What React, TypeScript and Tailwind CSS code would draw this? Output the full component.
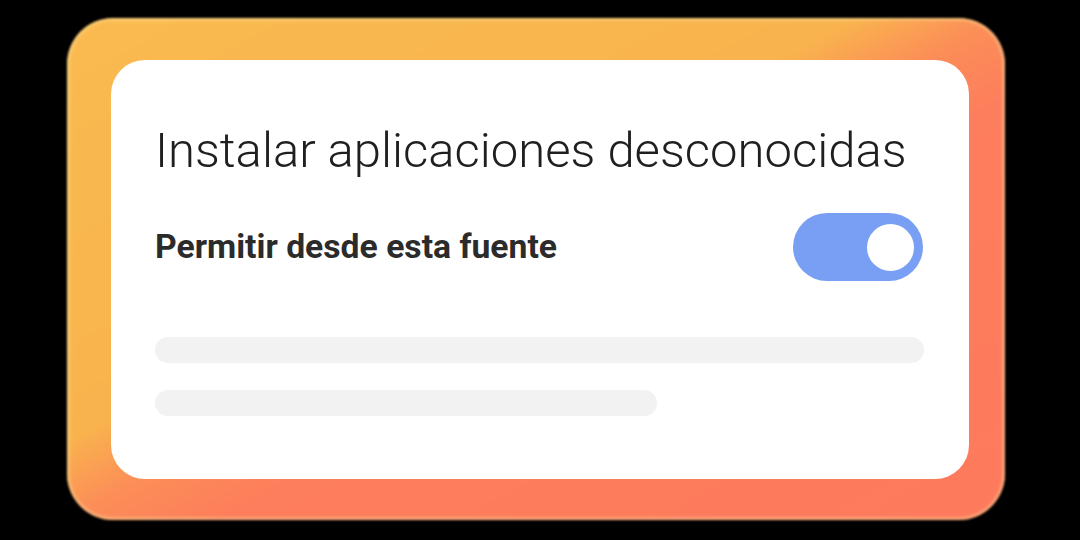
export default function App() {
  return (
    <div className="w-[1080px] h-[540px] bg-black overflow-hidden pl-[67px] pt-[18px]" style={{ fontFamily: 'Roboto, "Liberation Sans", sans-serif' }}>
      {/* glow frame: yellow up-left, coral down-right */}
      <div className="relative w-[938px] h-[502px] pl-[44px] pt-[42px] pr-[36px] pb-[41px]">
        <div className="absolute inset-0 rounded-[46px] bg-[linear-gradient(to_bottom_right,#fabb50_0%,#f9b34e_42%,#fc8d58_50%,#fd7e5c_58%,#fe7a5d_100%)] shadow-[inset_0_0_3px_2px_rgba(255,236,170,0.55)] blur-[0.8px]" />
        <div className="relative w-full h-full bg-white rounded-[34px] pl-[44px] pr-[46px] pt-[66px]">
          <h1 className="text-[49px] font-light leading-none text-[#1f1f1f]">Instalar aplicaciones desconocidas</h1>
          <div className="flex items-center justify-between mt-[38px]">
            <span className="text-[33.7px] font-bold text-[#2b2b2b]">Permitir desde esta fuente</span>
            <div className="w-[130px] h-[68px] rounded-full bg-[#789ff4] flex items-center justify-end pr-[9px]">
              <div className="w-[47px] h-[47px] rounded-full bg-white" />
            </div>
          </div>
          <div className="mt-[56px] flex flex-col gap-[27px]">
            <div className="h-[26px] w-[769px] rounded-full bg-[#f2f2f2]" />
            <div className="h-[26px] w-[502px] rounded-full bg-[#f2f2f2]" />
          </div>
        </div>
      </div>
    </div>
  )
}
